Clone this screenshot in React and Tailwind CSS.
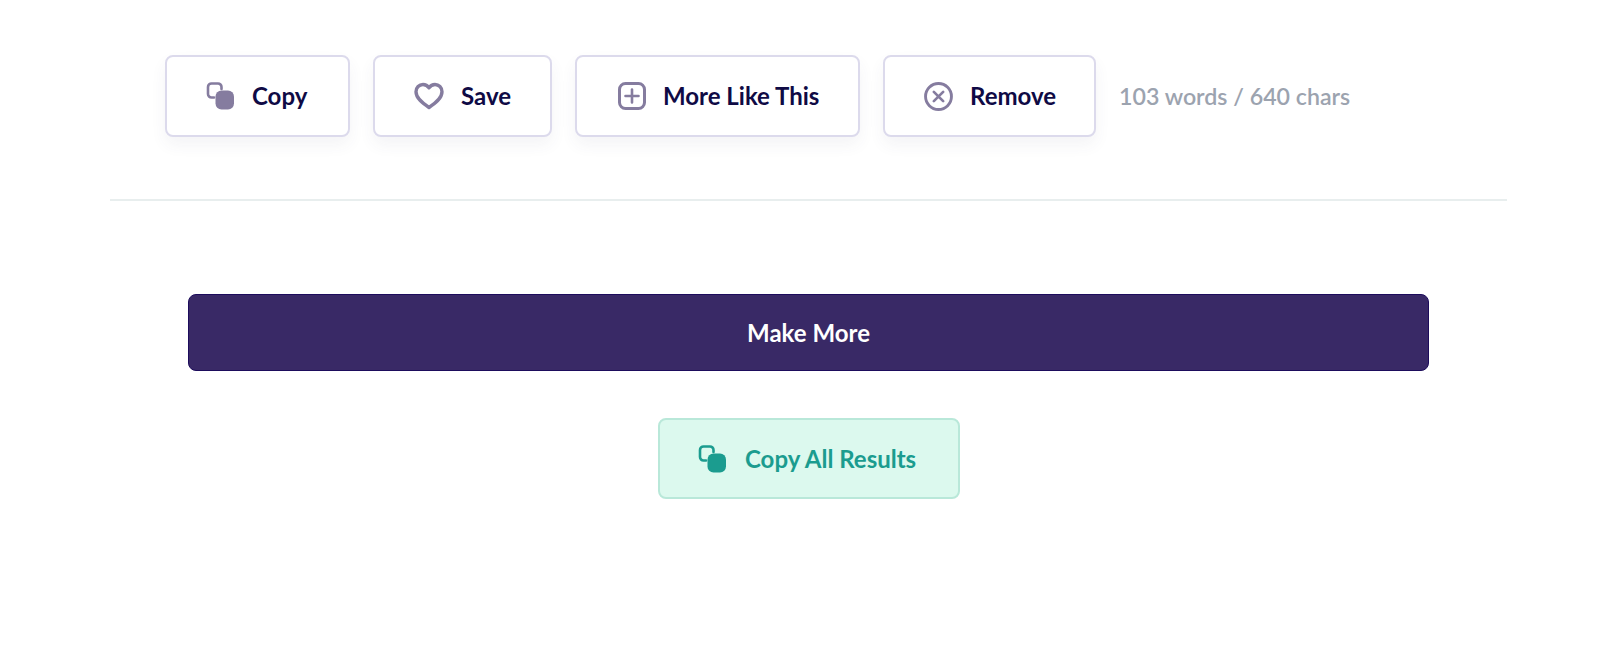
const FONT = "font-['Lato','Liberation_Sans',sans-serif]";

function CopyIcon({ className }) {
  return (
    <svg viewBox="0 0 28 28" className={className} fill="none">
      <path
        d="M8 15.5H5.5A3.5 3.5 0 0 1 2 12V5A3.5 3.5 0 0 1 5.5 1.5H12A3.5 3.5 0 0 1 15.5 5V7"
        stroke="currentColor"
        strokeWidth="2.6"
        strokeLinecap="round"
      />
      <rect x="9.5" y="8.5" width="18.5" height="19" rx="6" fill="currentColor" />
    </svg>
  );
}

function HeartIcon({ className }) {
  return (
    <svg viewBox="0 0 30 28" className={className} fill="none">
      <path
        d="M15 25.5C9 21.5 2 16.5 2 9.8C2 5.5 5.2 2.5 9 2.5C11.4 2.5 13.6 3.7 15 5.8C16.4 3.7 18.6 2.5 21 2.5C24.8 2.5 28 5.5 28 9.8C28 16.5 21 21.5 15 25.5Z"
        stroke="currentColor"
        strokeWidth="3.4"
        strokeLinejoin="round"
      />
    </svg>
  );
}

function PlusIcon({ className }) {
  return (
    <svg viewBox="0 0 28 28" className={className} fill="none">
      <rect x="1.5" y="1.5" width="25" height="25" rx="6" stroke="currentColor" strokeWidth="3" />
      <path d="M14 7.5V20.5M7.5 14H20.5" stroke="currentColor" strokeWidth="2.6" strokeLinecap="round" />
    </svg>
  );
}

function RemoveIcon({ className }) {
  return (
    <svg viewBox="0 0 28 28" className={className} fill="none">
      <circle cx="14" cy="14" r="12.5" stroke="currentColor" strokeWidth="2.8" />
      <path d="M9.5 9.5L18.5 18.5M18.5 9.5L9.5 18.5" stroke="currentColor" strokeWidth="2.6" strokeLinecap="round" />
    </svg>
  );
}

const ACTIONS = [
  { label: "Copy", Icon: CopyIcon, width: "w-[185px]", icon: "w-[28px] h-[28px]", pad: "pl-[39px]", gap: "gap-[18px]" },
  { label: "Save", Icon: HeartIcon, width: "w-[179px]", icon: "w-[30px] h-[28px]", pad: "pl-[39px]", gap: "gap-[17px]" },
  { label: "More Like This", Icon: PlusIcon, width: "w-[285px]", icon: "w-[28px] h-[28px]", pad: "pl-[41px]", gap: "gap-[17px]" },
  { label: "Remove", Icon: RemoveIcon, width: "w-[213px]", icon: "w-[29px] h-[29px]", pad: "pl-[39px]", gap: "gap-[17px]" },
];

export default function App() {
  return (
    <div className={`${FONT} min-h-[661px] bg-white`}>
      <div className="flex items-center gap-[23px] pt-[55px] pl-[165px]">
        {ACTIONS.map(({ label, Icon, width, icon, pad, gap }) => (
          <button
            key={label}
            className={`flex h-[82px] ${width} ${pad} ${gap} items-center rounded-lg border-2 border-[#dcdaec] bg-white text-[24px] font-bold text-[#0f0a45] shadow-[0_8px_16px_rgba(60,60,110,0.06)]`}
          >
            <Icon className={`${icon} shrink-0 text-[#857c9f]`} />
            <span>{label}</span>
          </button>
        ))}
        <span className="text-[23.2px] font-semibold text-[#9ca3af]">103 words / 640 chars</span>
      </div>

      <div className="ml-[110px] mt-[62px] h-[2px] w-[1397px] bg-[#e8eeee]" />

      <div className="mt-[93px] ml-[188px] w-[1241px]">
        <button className="flex h-[77px] w-full items-center justify-center rounded-lg border border-[#1d0c5c] bg-[#392966] text-[24px] font-bold text-white">
          Make More
        </button>
      </div>

      <div className="mt-[47px] ml-[658px]">
        <button className="flex h-[81px] w-[302px] items-center gap-[19px] rounded-lg border-2 border-[#b9e8d9] bg-[#dcf9ee] pl-[38px] text-[24px] font-bold text-[#1b9c8f]">
          <CopyIcon className="w-[28px] h-[28px] shrink-0" />
          <span>Copy All Results</span>
        </button>
      </div>
    </div>
  );
}
